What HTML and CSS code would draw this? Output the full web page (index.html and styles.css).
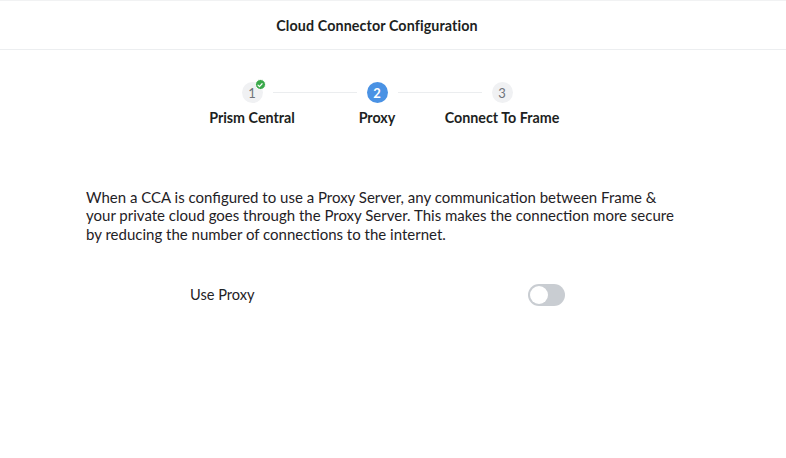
FILE: index.html
```html
<!DOCTYPE html>
<html>
<head>
<meta charset="utf-8">
<link rel="stylesheet" href="styles.css">
</head>
<body>
<header class="header">
  <div class="header-inner">
    <h1 class="title">Cloud Connector Configuration</h1>
  </div>
</header>
<div class="page">
  <div class="stepper">
    <div class="step">
      <div class="circle done">1
        <span class="check"><svg viewBox="0 0 10 10" width="8" height="8"><path d="M2.5 5.2 L4.3 7 L7.6 3.4" fill="none" stroke="#fff" stroke-width="1.5" stroke-linecap="round" stroke-linejoin="round"/></svg></span>
      </div>
      <div class="label">Prism Central</div>
    </div>
    <div class="line"></div>
    <div class="step">
      <div class="circle active">2</div>
      <div class="label">Proxy</div>
    </div>
    <div class="line"></div>
    <div class="step">
      <div class="circle">3</div>
      <div class="label">Connect To Frame</div>
    </div>
  </div>
  <p class="desc">When a CCA is configured to use a Proxy Server, any communication between Frame &amp; your private cloud goes through the Proxy Server. This makes the connection more secure by reducing the number of connections to the internet.</p>
  <div class="row">
    <span class="row-label">Use Proxy</span>
    <span class="toggle"><span class="knob"></span></span>
  </div>
</div>
</body>
</html>
```
FILE: styles.css
```css
html, body {
  margin: 0;
  padding: 0;
  background: #fff;
}
body {
  font-family: Lato, "Open Sans", sans-serif;
  color: #1f2226;
}
.page {
  width: 754px;
}
.header {
  height: 48px;
  border-top: 1px solid #f1f2f3;
  border-bottom: 1px solid #eceef0;
}
.header-inner {
  width: 754px;
  height: 100%;
  display: flex;
  align-items: center;
  justify-content: center;
}
.title {
  margin: 0;
  font-size: 14.3px;
  font-weight: 700;
  color: #1d1f22;
  letter-spacing: 0.1px;
}
.stepper {
  display: flex;
  justify-content: center;
  align-items: flex-start;
  margin-top: 32px;
}
.step {
  width: 21px;
  display: flex;
  flex-direction: column;
  align-items: center;
  position: relative;
}
.circle {
  width: 21px;
  height: 21px;
  border-radius: 50%;
  background: #f0f1f3;
  color: #6f7379;
  font-size: 13px;
  display: flex;
  align-items: center;
  justify-content: center;
  position: relative;
}
.circle.active {
  background: #4a92e4;
  color: #fff;
  font-weight: 700;
}
.check {
  position: absolute;
  top: -3px;
  right: -3px;
  width: 9px;
  height: 9px;
  border-radius: 50%;
  background: #3aa94a;
  border: 1px solid #fff;
  display: flex;
  align-items: center;
  justify-content: center;
}
.label {
  white-space: nowrap;
  margin-top: 6px;
  font-size: 14.3px;
  font-weight: 700;
  color: #1d1f22;
}
.line {
  width: 84px;
  height: 1px;
  background: #ebedef;
  margin: 10px 10px 0;
}
.desc {
  margin: 62px 0 0 86px;
  width: 592px;
  font-size: 15px;
  line-height: 18.3px;
  color: #1f2226;
}
.row {
  display: flex;
  align-items: center;
  justify-content: space-between;
  width: 375px;
  margin: 41px 0 0 190px;
}
.row-label {
  font-size: 14.6px;
  color: #1f2226;
}
.toggle {
  width: 37px;
  height: 22px;
  border-radius: 11px;
  background: #c9cdd2;
  display: flex;
  align-items: center;
  padding-left: 2px;
  box-sizing: border-box;
}
.knob {
  width: 18px;
  height: 18px;
  border-radius: 50%;
  background: #fff;
}
```
